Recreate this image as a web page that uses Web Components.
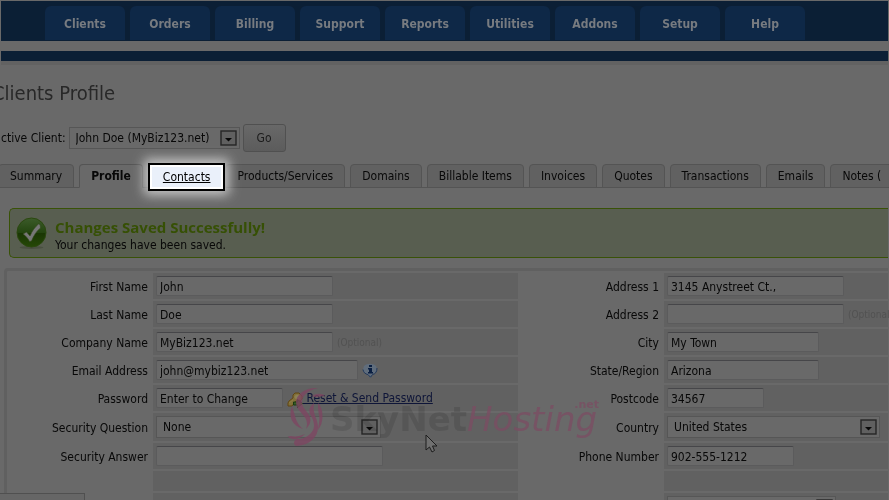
<!DOCTYPE html>
<html lang="en">
<head>
<meta charset="utf-8">
<title>Clients Profile</title>
<style>
    html, body {
        margin: 0;
        height: 100%;
        overflow: hidden;
        background: #696969;
    }

    body {
        font: 12px/16px "DejaVu Sans Condensed", "DejaVu Sans", Tahoma, sans-serif;
        color: #080808;
    }
</style>
</head>
<body>
<admin-page></admin-page>

<script>
const arrowIcon = `
    <svg class="arrow" width="17" height="16" viewBox="0 0 17 16" aria-hidden="true">
        <rect x="1" y="1" width="15" height="14" fill="#606060" stroke="#252525" stroke-width="1.4"/>
        <path d="M5 8h7l-3.500 3.500z" fill="#080808"/>
    </svg>`;

const selectStyle = `
    .select {
        display: inline-grid;
        align-items: center;
    }

    .select select, .select .arrow {
        grid-area: 1 / 1;
    }

    .select .arrow {
        justify-self: end;
        margin-right: 3px;
        pointer-events: none;
    }

    select {
        appearance: none;
        box-sizing: border-box;
        width: 100%;
        height: 22px;
        padding: 0 22px 0 6px;
        border: 1px solid #565656;
        border-radius: 0;
        background: #696969;
        font: inherit;
        color: inherit;
    }`;

customElements.define('nav-item', class extends HTMLElement {
    constructor() {
        super();
        this.attachShadow({mode: 'open'}).innerHTML = `
            <style>
                :host {
                    display: block;
                    flex: 0 0 80px;
                }

                a {
                    display: block;
                    height: 34px;
                    border-radius: 6px 6px 0 0;
                    background: #0e2847;
                    color: #777b80;
                    font-weight: bold;
                    line-height: 36px;
                    text-align: center;
                    text-decoration: none;
                }
            </style>
            <a href="#"><slot></slot></a>
        `;
    }
});

customElements.define('nav-bar', class extends HTMLElement {
    constructor() {
        super();
        this.attachShadow({mode: 'open'}).innerHTML = `
            <style>
                :host {
                    display: block;
                }

                nav {
                    display: flex;
                    gap: 5px;
                    padding: 5px 0 1px 44px;
                    background: #0b1f35;
                }

                .stripe {
                    height: 10px;
                    margin-top: 10px;
                    border-bottom: 4px solid #626262;
                    background: #0b1f35;
                }
            </style>
            <nav><slot></slot></nav>
            <div class="stripe"></div>
        `;
    }
});

customElements.define('client-picker', class extends HTMLElement {
    constructor() {
        super();
        this.attachShadow({mode: 'open'}).innerHTML = `
            <style>
                :host {
                    display: flex;
                    align-items: center;
                    gap: 3px;
                }

                .select {
                    width: 171px;
                }

                button {
                    width: 43px;
                    height: 28px;
                    padding: 0;
                    border: 1px solid #505050;
                    border-radius: 3px;
                    background: linear-gradient(#686868, #5c5c5c);
                    font: inherit;
                    color: #1c1c1c;
                }
                ${selectStyle}
            </style>
            <label for="client">ctive Client:</label>
            <span class="select">
                <select id="client"><option>John Doe (MyBiz123.net)</option></select>
                ${arrowIcon}
            </span>
            <button type="button">Go</button>
        `;
    }
});

customElements.define('profile-tab', class extends HTMLElement {
    constructor() {
        super();
        this.attachShadow({mode: 'open'}).innerHTML = `
            <style>
                :host {
                    display: block;
                    flex: none;
                    position: relative;
                }

                a {
                    display: block;
                    padding: 0 11px;
                    border: 1px solid #545454;
                    border-radius: 4px 4px 0 0;
                    background: #616161;
                    color: inherit;
                    line-height: 22px;
                    text-decoration: none;
                }

                :host([active]) a {
                    border-bottom-color: #696969;
                    background: #696969;
                    font-weight: bold;
                }

                /* spotlight frame lies over the neighbouring tabs */
                :host([spotlight]) {
                    z-index: 1;
                }

                :host([spotlight]) a {
                    padding: 0 13px;
                    margin: -1px -5px -3px 0;
                    border: 2px solid #000;
                    border-radius: 0;
                    box-shadow: inset 0 0 0 2px #fff, 0 0 12px 4px #c8c8c8;
                    background: #eaf0fa;
                    color: #000;
                    line-height: 24px;
                    text-decoration: underline;
                }
            </style>
            <a href="#"><slot></slot></a>
        `;
    }
});

customElements.define('profile-tabs', class extends HTMLElement {
    constructor() {
        super();
        this.attachShadow({mode: 'open'}).innerHTML = `
            <style>
                :host {
                    display: block;
                    box-shadow: inset 0 -1px #545454;
                }

                nav {
                    display: flex;
                    gap: 5px;
                    height: 24px;
                }
            </style>
            <nav><slot></slot></nav>
        `;
    }
});

customElements.define('success-box', class extends HTMLElement {
    constructor() {
        super();
        this.attachShadow({mode: 'open'}).innerHTML = `
            <style>
                :host {
                    display: flex;
                    align-items: center;
                    gap: 8px;
                    padding: 8px 6px 4px;
                    border: 1px solid #395207;
                    border-right: 0;
                    border-radius: 5px 0 0 5px;
                    background: #585e50;
                }

                svg {
                    flex: none;
                    margin-top: -4px;
                }

                strong {
                    display: block;
                    color: #365004;
                    font: bold 15px/20px "Open Sans", sans-serif;
                }
            </style>
            <svg width="31" height="33" viewBox="0 0 31 33" aria-hidden="true">
                <defs>
                    <linearGradient id="ball" x1="0" y1="0" x2="0" y2="1">
                        <stop offset="0" stop-color="#3c5b2a"/>
                        <stop offset=".5" stop-color="#244510"/>
                        <stop offset=".52" stop-color="#1a3604"/>
                        <stop offset="1" stop-color="#254806"/>
                    </linearGradient>
                </defs>
                <ellipse cx="15.500" cy="30.500" rx="12" ry="1.500" fill="#4a5041"/>
                <circle cx="15.500" cy="15.500" r="14.500" fill="url(#ball)" stroke="#2b480f"/>
                <path d="M7 17l3.500-2 3.500 4c2-5 5-9 8.500-12l1.500.5.500 3.500c-4 3-6.500 7-9 13l-2 .5c-1.500-3-3.500-5.500-6.500-7.500z" fill="#777" stroke="#34491f" stroke-width=".6"/>
            </svg>
            <div>
                <strong><slot name="title"></slot></strong>
                <slot></slot>
            </div>
        `;
    }
});

// one labelled row; attributes: label, value, type (text|select|blank), width, hint
customElements.define('form-row', class extends HTMLElement {
    connectedCallback() {
        if (this.shadowRoot) return;
        const type = this.getAttribute('type') || 'text';
        const label = this.getAttribute('label') || '';
        const value = this.getAttribute('value') || '';
        const hint = this.getAttribute('hint');
        let control = '';

        if (type === 'text') {
            control = `<input id="field" type="text" value="${value}">`;
        } else if (type === 'select') {
            control = `<span class="select"><select id="field" aria-label="${label || 'Option'}"><option>${value}</option></select>${arrowIcon}</span>`;
        }

        this.attachShadow({mode: 'open'}).innerHTML = `
            <style>
                :host {
                    display: grid;
                    grid-template-columns: 142px minmax(0, 1fr);
                    gap: 2px;
                }

                .label {
                    padding: 1px 3px 0 0;
                    align-self: center;
                    text-align: right;
                }

                .cell {
                    display: flex;
                    align-items: center;
                    gap: 4px;
                    min-height: 20px;
                    padding: ${type === 'blank' ? '0' : '3px'};
                    background: #616161;
                    white-space: nowrap;
                }

                input, .select {
                    flex: none;
                    width: ${this.getAttribute('width') || 177}px;
                }

                input {
                    box-sizing: border-box;
                    height: 20px;
                    padding: 1px 3px 0;
                    border: 1px solid #5b5b5c;
                    border-top-color: #464649;
                    border-radius: 2px;
                    background: #696969;
                    font: inherit;
                    color: inherit;
                }

                .hint {
                    padding-top: 2px;
                    color: #525252;
                    font-size: 10px;
                }
                ${selectStyle}
            </style>
            <div class="label">${label ? `<label for="field">${label}</label>` : ''}</div>
            <div class="cell">
                ${control}
                ${hint ? `<span class="hint">${hint}</span>` : ''}
                <slot></slot>
            </div>
        `;
    }
});

customElements.define('info-icon', class extends HTMLElement {
    constructor() {
        super();
        this.attachShadow({mode: 'open'}).innerHTML = `
            <style>
                :host {
                    display: block;
                }

                svg {
                    display: block;
                }
            </style>
            <svg width="16" height="16" viewBox="0 0 16 16" aria-hidden="true">
                <path d="M2 4c3-3 9-3 12 0l1 3c0 2.700-1.700 4.500-4.300 5.100L8.500 15.500 6 12.500C3 12 1 10.200 1 7.300z" fill="#606d7c"/>
                <path d="M15 6c0 4-1.700 6-4.300 6.400L8.500 15.200 6 12.600C3 12 1.300 10 1 7.500" fill="none" stroke="#22395c"/>
                <rect x="7" y="3" width="3" height="2" fill="#0a1f42"/>
                <path d="M6 6h4v4h1v1.500H6V10h1V7.500H6z" fill="#0a1f42"/>
            </svg>
        `;
    }
});

customElements.define('reset-link', class extends HTMLElement {
    constructor() {
        super();
        this.attachShadow({mode: 'open'}).innerHTML = `
            <style>
                :host {
                    display: block;
                }

                a {
                    display: flex;
                    align-items: center;
                    color: #0e1538;
                }

                svg {
                    margin-top: 3px;
                }

                span {
                    white-space: pre;
                }
            </style>
            <a href="#">
                <svg width="16" height="16" viewBox="0 0 16 16" aria-hidden="true">
                    <path d="M8 1h4l3 3v3l-2 2H9L5 14H1v-3l1-2 4-3V3z" fill="#807039" stroke="#634713"/>
                    <path d="M9 3h3l1 2-1 2H9L7.500 5zM2 11l4-3" fill="#8a8158" stroke="#91804a" stroke-width=".7"/>
                    <path d="M6.500 10h4V7.500l5 4-5 4V13h-4z" fill="#375b26" stroke="#183b10"/>
                </svg>
                <span> Reset &amp; Send Password</span>
            </a>
        `;
    }
});

customElements.define('profile-form', class extends HTMLElement {
    constructor() {
        super();
        this.attachShadow({mode: 'open'}).innerHTML = `
            <style>
                :host {
                    display: block;
                }

                form {
                    display: grid;
                    grid-template-columns: minmax(0, 509fr) minmax(0, 368fr);
                    gap: 2px;
                    padding: 2px 0 0 2px;
                    border: 3px solid #606060;
                    border-width: 3px 0 0 3px;
                    border-radius: 4px 0 0 0;
                }

                .column {
                    display: grid;
                    gap: 2px;
                    align-content: start;
                }
            </style>
            <form>
                <div class="column">
                    <form-row label="First Name" value="John"></form-row>
                    <form-row label="Last Name" value="Doe"></form-row>
                    <form-row label="Company Name" value="MyBiz123.net" hint="(Optional)"></form-row>
                    <form-row label="Email Address" value="john@mybiz123.net" width="202"><info-icon></info-icon></form-row>
                    <form-row label="Password" value="Enter to Change" width="127"><reset-link></reset-link></form-row>
                    <form-row type="select" label="Security Question" value="None" width="225"></form-row>
                    <form-row label="Security Answer" width="227"></form-row>
                    <form-row type="blank"></form-row>
                    <form-row type="blank"></form-row>
                </div>
                <div class="column">
                    <form-row label="Address 1" value="3145 Anystreet Ct.,"></form-row>
                    <form-row label="Address 2" hint="(Optional)"></form-row>
                    <form-row label="City" value="My Town" width="152"></form-row>
                    <form-row label="State/Region" value="Arizona" width="152"></form-row>
                    <form-row label="Postcode" value="34567" width="97"></form-row>
                    <form-row type="select" label="Country" value="United States" width="213"></form-row>
                    <form-row label="Phone Number" value="902-555-1212" width="127"></form-row>
                    <form-row type="blank"></form-row>
                    <form-row type="select" width="169"></form-row>
                </div>
            </form>
        `;
    }
});

customElements.define('brand-watermark', class extends HTMLElement {
    constructor() {
        super();
        this.attachShadow({mode: 'open'}).innerHTML = `
            <style>
                :host {
                    display: flex;
                    gap: 3px;
                    pointer-events: none;
                    font: 34px/40px "DejaVu Sans", sans-serif;
                }

                .name {
                    padding-top: 13px;
                }

                /* multiply keeps the controls below it crisp */
                .sky {
                    color: #e2e2e2;
                    font-weight: bold;
                    mix-blend-mode: multiply;
                }

                .hosting {
                    color: #7b4c62c0;
                    font-style: oblique;
                }

                .net {
                    position: absolute;
                    top: 11px;
                    right: -2px;
                    color: #7b4c62c0;
                    font-size: 11px;
                    font-weight: bold;
                    line-height: 16px;
                }
            </style>
            <svg width="40" height="62" viewBox="0 0 40 62" aria-hidden="true">
                <g fill="#7d4661" fill-opacity=".8">
                    <path d="M31 2C18 1 9 9 9 16c0 6 4 9 8 14 3 4 4 8 2 13 4-4 6-9 3-14-3-5-7-8-7-13 0-6 6-12 16-14z"/>
                    <path d="M27 17c-5 4-6 8-3 13s5 12 0 17c-4 4-8 6-14 6-4 1-4 7 0 7 12-1 21-8 21-19 0-9-6-12-4-24z"/>
                    <path d="M5 20C1 30 5 40 16 43 11 39 9 34 8 30 7 26 6 24 5 20z"/>
                    <path d="M31 17c6 6 6 20 0 27 1-8 2-10 1-15-1-5-1-8-1-12z"/>
                    <path d="M1 51c5 4 12 2 17-3-5 2-9 3-14 2-3 0-4 1-3 1zM25 10c5-3 10-3 13 0-4 0-8 2-13 0z"/>
                </g>
            </svg>
            <div class="name"><span class="sky">SkyNet</span><span class="hosting">Hosting</span><span class="net">.net</span></div>
        `;
    }
});

customElements.define('admin-page', class extends HTMLElement {
    constructor() {
        super();
        this.attachShadow({mode: 'open'}).innerHTML = `
            <style>
                :host {
                    display: block;
                    position: relative;
                    box-sizing: border-box;
                    height: 100vh;
                    padding: 1px;
                    overflow: hidden;
                }

                h1 {
                    margin: 16px 0 19px -9px;
                    color: #282828;
                    font-size: 20px;
                    font-weight: normal;
                    line-height: 24px;
                }

                client-picker {
                    margin-bottom: 12px;
                }

                profile-tabs {
                    margin-bottom: 20px;
                }

                profile-tab:first-child {
                    margin-left: -3px;
                }

                success-box {
                    margin: 0 0 10px 8px;
                }

                profile-form {
                    margin-left: 3px;
                }

                brand-watermark {
                    position: absolute;
                    left: 287px;
                    top: 386px;
                }

                .pointer {
                    position: absolute;
                    left: 425px;
                    top: 434px;
                }

                .status {
                    position: absolute;
                    left: 0;
                    bottom: 0;
                    width: 84px;
                    height: 6px;
                    border: 1px solid #505050;
                    border-width: 1px 1px 0 0;
                    background: #666;
                }
            </style>
            <nav-bar>
                <nav-item>Clients</nav-item>
                <nav-item>Orders</nav-item>
                <nav-item>Billing</nav-item>
                <nav-item>Support</nav-item>
                <nav-item>Reports</nav-item>
                <nav-item>Utilities</nav-item>
                <nav-item>Addons</nav-item>
                <nav-item>Setup</nav-item>
                <nav-item>Help</nav-item>
            </nav-bar>
            <h1>Clients Profile</h1>
            <client-picker></client-picker>
            <profile-tabs>
                <profile-tab>Summary</profile-tab>
                <profile-tab active>Profile</profile-tab>
                <profile-tab spotlight>Contacts</profile-tab>
                <profile-tab>Products/Services</profile-tab>
                <profile-tab>Domains</profile-tab>
                <profile-tab>Billable Items</profile-tab>
                <profile-tab>Invoices</profile-tab>
                <profile-tab>Quotes</profile-tab>
                <profile-tab>Transactions</profile-tab>
                <profile-tab>Emails</profile-tab>
                <profile-tab>Notes (</profile-tab>
            </profile-tabs>
            <success-box>
                <span slot="title">Changes Saved Successfully!</span>
                Your changes have been saved.
            </success-box>
            <profile-form></profile-form>
            <brand-watermark></brand-watermark>
            <svg class="pointer" width="14" height="20" viewBox="0 0 14 20" aria-hidden="true">
                <path d="M1 1v15l3.500-3 2.500 5 2.500-1.500L7.500 12H12z" fill="#707070" stroke="#1d1d1d"/>
            </svg>
            <div class="status"></div>
        `;
    }
});
</script>
</body>
</html>
